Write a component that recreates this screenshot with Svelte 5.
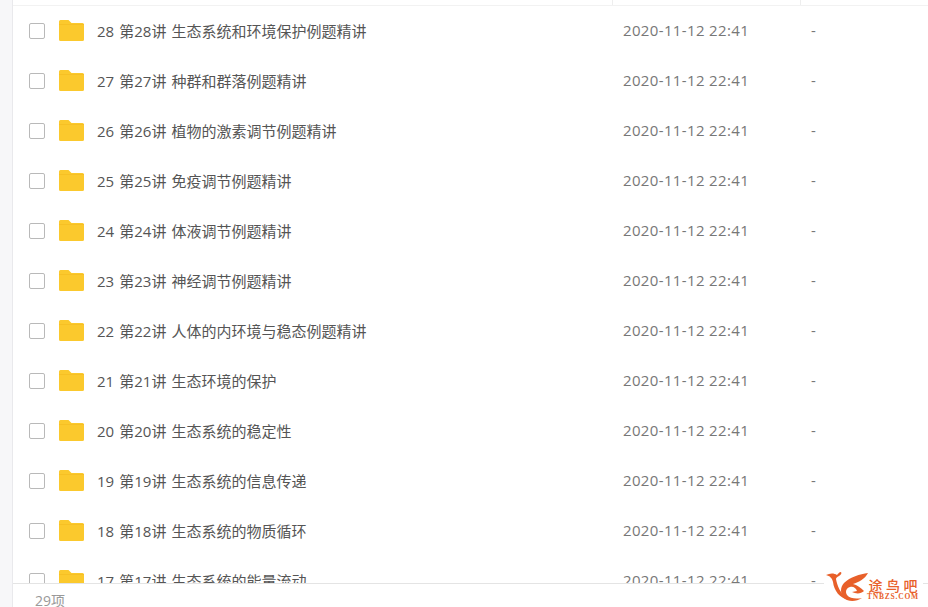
<script lang="ts">
    const rows = [
        "28 第28讲 生态系统和环境保护例题精讲",
        "27 第27讲 种群和群落例题精讲",
        "26 第26讲 植物的激素调节例题精讲",
        "25 第25讲 免疫调节例题精讲",
        "24 第24讲 体液调节例题精讲",
        "23 第23讲 神经调节例题精讲",
        "22 第22讲 人体的内环境与稳态例题精讲",
        "21 第21讲 生态环境的保护",
        "20 第20讲 生态系统的稳定性",
        "19 第19讲 生态系统的信息传递",
        "18 第18讲 生态系统的物质循环",
        "17 第17讲 生态系统的能量流动",
    ];
</script>

<div class="page">
    <aside class="strip"></aside>
    <main>
        <div class="head">
            <span class="cell-name"></span>
            <span class="cell-date"></span>
            <span class="cell-size"></span>
        </div>
        <ul>
            {#each rows as name}
                <li>
                    <span class="check"></span>
                    <svg class="folder" viewBox="0 0 25 21" width="25" height="21">
                        <path d="M1.5 0h8l3 3h11a1.5 1.5 0 0 1 1.5 1.5v15a1.5 1.5 0 0 1-1.5 1.5h-22A1.5 1.5 0 0 1 0 19.5v-18A1.5 1.5 0 0 1 1.5 0z" fill="#fbc92d" />
                        <path d="M0 4.5h25" stroke="#f3bb20" stroke-width="0.6" />
                    </svg>
                    <span class="name">{name}</span>
                    <span class="date">2020-11-12 22:41</span>
                    <span class="size">-</span>
                </li>
            {/each}
        </ul>
        <footer>29项</footer>
    </main>
    <div class="mark">
        <svg viewBox="0 0 42 32" width="42" height="32">
            <path d="M0 4C4 2 8 2 11 4C12 3 13 1 15 1C16 2 15 4 13 5C11 6 10 7 10 8C11 14 14 22 22 29C14 27 8 20 7 11C6 7 4 5 0 4Z" fill="#e8602a" />
            <path d="M42 2C34 3 24 6 18 12C14 16 14 23 18 27C22 31 30 31 36 27C31 28 24 28 21 24C19 21 20 17 24 16C27 15 30 17 31 20L26 21C30 23 35 23 38 20C35 17 31 14 27 13C33 11 39 8 42 2Z" fill="#e8602a" />
        </svg>
        <div class="mark-text">
            <span class="mark-cn">途鸟吧</span>
            <span class="mark-en">TNBZS.COM</span>
        </div>
    </div>
</div>

<style>
    :global(body) {
        margin: 0;
        background: #fff;
    }

    .page {
        display: flex;
        position: relative;
        width: 928px;
        height: 607px;
        overflow: hidden;
        font-family: "Open Sans", "Noto Sans CJK SC", sans-serif;
    }

    .strip {
        width: 12px;
        flex: none;
        background: #f7f7f9;
        border-right: 1px solid #e9e9ec;
    }

    main {
        flex: 1;
        min-width: 0;
        display: flex;
        flex-direction: column;
    }

    .head {
        height: 5px;
        flex: none;
        display: flex;
        border-bottom: 1px solid #f2f2f2;
    }

    .cell-name {
        width: 599px;
        border-right: 1px solid #eeeeee;
    }

    .cell-date {
        width: 187px;
        border-right: 1px solid #eeeeee;
    }

    ul {
        flex: 1;
        min-height: 0;
        overflow: hidden;
        list-style: none;
        margin: 0;
        padding: 0;
    }

    li {
        height: 50px;
        display: flex;
        align-items: center;
        padding-left: 16px;
    }

    .check {
        width: 14px;
        height: 14px;
        flex: none;
        border: 1px solid #b9b9b9;
        border-radius: 2px;
    }

    .folder {
        flex: none;
        margin-left: 14px;
        margin-top: -2px;
    }

    .name {
        width: 526px;
        flex: none;
        margin-left: 13px;
        margin-top: -2px;
        font-size: 15px;
        word-spacing: 1.2px;
        color: #555;
        white-space: nowrap;
    }

    .date {
        width: 188px;
        flex: none;
        margin-top: -2px;
        font-size: 15px;
        letter-spacing: 0.36px;
        color: #777;
    }

    .size {
        margin-top: -2px;
        font-size: 15px;
        color: #777;
    }

    footer {
        height: 23px;
        flex: none;
        border-top: 1px solid #e4e4e4;
        padding-left: 22px;
        font-size: 14px;
        line-height: 34px;
        color: #999;
    }

    /* watermark sits over the footer */
    .mark {
        position: absolute;
        right: 5px;
        bottom: 4px;
        display: flex;
        align-items: flex-end;
        background: #fff;
        padding: 0 5px 0 2px;
    }

    .mark-text {
        display: flex;
        flex-direction: column;
        align-items: center;
        margin-bottom: 3px;
        width: 50px;
        color: #e8602a;
    }

    .mark-cn {
        font-size: 14px;
        font-weight: 500;
        line-height: 15px;
        letter-spacing: 3.5px;
        margin-right: -3.5px;
    }

    .mark-en {
        font-family: "Liberation Serif", serif;
        font-size: 7.5px;
        line-height: 7px;
        font-weight: 700;
        letter-spacing: 0.8px;
    }
</style>
